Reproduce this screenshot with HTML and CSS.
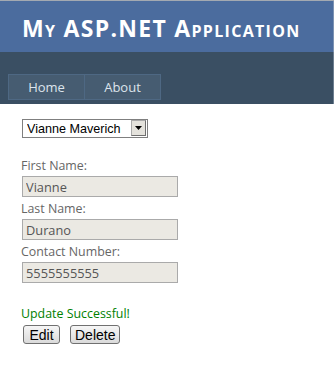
FILE: index.html
```
<!DOCTYPE html>
<html lang="en">
<head>
    <meta charset="UTF-8">
    <title>My ASP.NET Application</title>
    <link rel="stylesheet" href="styles.css">
</head>
<body>
    <div class="page">
        <!-- Header with title -->
        <div class="header">
            <h1>My ASP.NET Application</h1>
        </div>

        <!-- Menu -->
        <div class="menu-bar">
            <div class="menu">
                <a href="#">Home</a>
                <a href="#">About</a>
            </div>
        </div>

        <!-- Main content -->
        <div class="main">
            <div class="select-wrap">
                <select class="person">
                    <option>Vianne Maverich</option>
                </select>
                <span class="select-btn">
                    <svg width="7" height="4" viewBox="0 0 7 4"><path d="M0 0h7L3.5 4z" fill="#000"/></svg>
                </span>
            </div>

            <div class="form">
                <label>First Name:</label>
                <input type="text" value="Vianne" disabled>
                <label>Last Name:</label>
                <input type="text" value="Durano" disabled>
                <label>Contact Number:</label>
                <input type="text" value="5555555555" disabled>
            </div>

            <p class="message">Update Successful!</p>
            <div class="actions">
                <button class="edit">Edit</button>
                <button>Delete</button>
            </div>
        </div>
    </div>
</body>
</html>
```

FILE: styles.css
```
/* Base */
html, body {
    margin: 0;
    padding: 0;
    background-color: white;
    font-family: 'Open Sans', 'Noto Sans', sans-serif;
}
.page {
    border-top: 1px solid #a3a9b1;
}

/* Header */
.header {
    background-color: #4b6c9e;
    height: 51px;
    border-right: 1px solid #7d93b3;
}
.header h1 {
    margin: 0;
    padding: 0 0 0 22px;
    color: white;
    font-size: 23px;
    font-weight: bold;
    font-variant: small-caps;
    line-height: 55px;
    letter-spacing: 1.3px;
}

/* Menu */
.menu-bar {
    background-color: #3a4f63;
    height: 52px;
    padding-left: 8px;
    display: flex;
    align-items: flex-end;
    border-right: 1px solid #6e7f90;
}
.menu {
    display: flex;
    margin-bottom: 4px;
}
.menu a {
    display: block;
    width: 75px;
    height: 24px;
    line-height: 24px;
    text-align: center;
    background-color: #465c71;
    border: 1px solid #4e6883;
    color: #dde4ec;
    text-decoration: none;
    font-size: 13px;
}
.menu a + a {
    margin-left: -1px;
}

/* Content */
.main {
    padding: 15px 0 0 22px;
}
.select-wrap {
    position: relative;
    width: 126px;
}
.person {
    display: block;
    appearance: none;
    -webkit-appearance: none;
    width: 126px;
    height: 19px;
    padding: 0 0 0 4px;
    border: 1px solid #7f7f7f;
    border-radius: 0;
    background-color: white;
    color: black;
    font-family: Arial, 'Liberation Sans', sans-serif;
    font-size: 12.6px;
}
.select-btn {
    position: absolute;
    top: 1px;
    right: 2px;
    width: 15px;
    height: 16px;
    box-sizing: border-box;
    background-color: #e4e2dc;
    border: 1px solid #a9a9a9;
    border-right-color: #6f6f6f;
    border-bottom-color: #6f6f6f;
    display: flex;
    align-items: center;
    justify-content: center;
}
.form {
    margin-top: 19px;
    display: flex;
    flex-direction: column;
    align-items: flex-start;
}
.form label {
    color: #666;
    font-size: 12.4px;
    margin-left: -1px;
    line-height: 17px;
}
.form input {
    width: 148px;
    height: 17px;
    padding: 1px 3px;
    border: 1px solid #aaa;
    background-color: #ebe9e3;
    color: #555;
    font-family: 'Open Sans', 'Noto Sans', sans-serif;
    font-size: 12.8px;
    margin: 2px 0 3px 0;
}
.message {
    color: green;
    font-size: 12.4px;
    margin: 19px 0 3px -1px;
}
.actions {
    display: flex;
    gap: 10px;
    padding-left: 1px;
}
.actions button {
    font-family: Arial, 'Liberation Sans', sans-serif;
    font-size: 14px;
    height: 19px;
    padding: 0 4px;
    border: 1px solid #707070;
    border-radius: 3px;
    background: linear-gradient(#f6f6f6, #dadada);
    color: black;
}
.actions .edit {
    min-width: 37px;
}
```
